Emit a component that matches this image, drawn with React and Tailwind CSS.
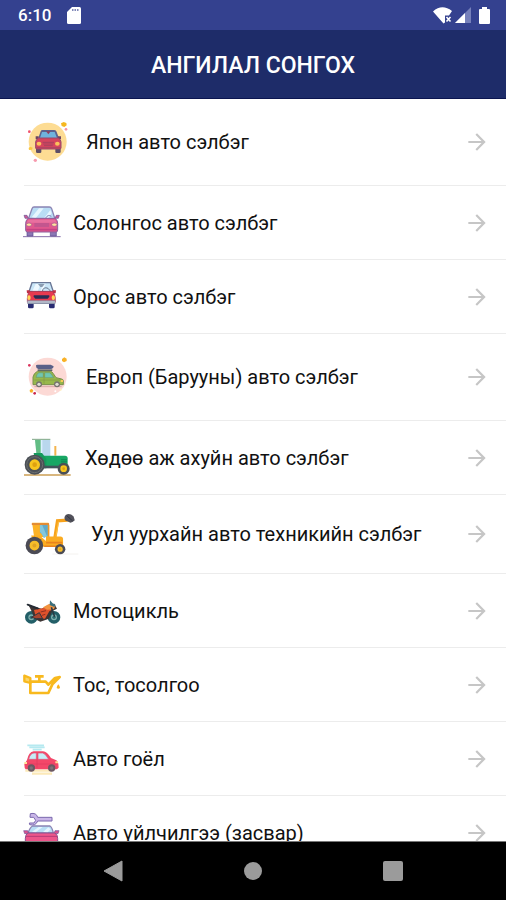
// src/pages/CategoryPage.jsx
import React from 'react';
import { MdArrowForward } from 'react-icons/md';

const JapanCarIcon = () => (
  <svg viewBox="0 0 150 150" className="size-[50px] shrink-0" aria-hidden="true">
    <circle cx="71" cy="74" r="57" fill="#fddc93" />
    <path d="M111 19l8-4 8 3 1 7-7 5-8-3z" fill="#f5b71f" />
    <circle cx="16" cy="44" r="4" fill="#f0526b" />
    <circle cx="126" cy="37" r="4" fill="#f793a5" />
    <circle cx="34" cy="130" r="5" fill="#f79aae" />
    <path d="M14 93l4-4 8 3-2 6-9 1z" fill="#fbc842" />
    <path d="M36 88h16v17q0 3-4 3h-8q-4 0-4-4zM94 88h16v16q0 4-4 4h-8q-4 0-4-3z" fill="#5d4e66" />
    <path d="M50 43q1-4 6-4h34q5 0 7 4l8 20H43z" fill="#5b6390" />
    <path d="M54 45h38l7 18H48z" fill="#6fb3dd" />
    <path d="M66 43h14l-7 9z" fill="#933e5c" />
    <path d="M35 58h9v9h-9zM102 58h9v9h-9z" fill="#6c4461" />
    <path d="M44 63h59q8 5 8 12v18q0 3-4 3H39q-4 0-4-3V75q0-7 9-12z" fill="#d6455e" stroke="#94496a" strokeWidth="3" />
    <ellipse cx="45" cy="80" rx="7" ry="6" fill="#fbc25c" />
    <ellipse cx="100" cy="80" rx="7" ry="6" fill="#fbc25c" />
    <path d="M56 76h34M58 81h30M60 86h26" stroke="#a0415e" strokeWidth="2.5" />
    <path d="M37 92h72" stroke="#b34460" strokeWidth="4" />
  </svg>
);

const KoreaCarIcon = () => (
  <svg viewBox="0 0 111 111" className="size-[37px] shrink-0 overflow-visible" aria-hidden="true">
    <path d="M-3 98h113" stroke="#8770aa" strokeWidth="3" />
    <path d="M9 82h18v14H9zM79 82h18v14H79z" fill="#8b77b4" stroke="#5b4c91" strokeWidth="2" />
    <path d="M30 9h46q5 0 7 5l10 31H13l11-31q2-5 6-5z" fill="#b9ddf5" stroke="#8b84b4" strokeWidth="4" />
    <path d="M23 40l22-27h14L35 43zM60 43l19-25 4 10-10 15z" fill="#e6f6ff" />
    <path d="M65 42q7-12 17-5" fill="none" stroke="#7e82b9" strokeWidth="3" />
    <path d="M0 34h9l4 9H3zM97 34h9l-3 9H93z" fill="#c95b95" stroke="#6b5398" strokeWidth="2" />
    <path d="M12 43h82q7 7 7 15v20q0 6-5 6H10q-5 0-5-6V58q0-8 7-15z" fill="#e0588e" stroke="#8d5e9c" strokeWidth="3" />
    <path d="M13 47h80l5 9H8z" fill="#e8709f" />
    <ellipse cx="15" cy="62" rx="8" ry="5" fill="#ffe39b" stroke="#a05b98" strokeWidth="2" />
    <ellipse cx="91" cy="62" rx="8" ry="5" fill="#ffe39b" stroke="#a05b98" strokeWidth="2" />
    <path d="M31 60h44M31 66h44" stroke="#a5548f" strokeWidth="3" />
    <path d="M7 77h92" stroke="#c44384" strokeWidth="5" />
  </svg>
);

const RussiaCarIcon = () => (
  <svg viewBox="0 0 111 111" className="size-[37px] shrink-0" aria-hidden="true">
    <path d="M12 73h17v14q0 4-4 4h-9q-4 0-4-4zM75 73h17v14q0 4-4 4h-9q-4 0-4-4z" fill="#292c72" />
    <path d="M24 14h55l9 27H15z" fill="#c9e6f8" stroke="#6a7897" strokeWidth="4" />
    <path d="M35 18h15l-9 22H25zM58 17h7L56 40h-7z" fill="#edf8ff" />
    <path d="M42 18h20l-7 9h-6z" fill="#8a9cb1" />
    <path d="M55 40q3-15 17-9l8 9" fill="none" stroke="#69778f" strokeWidth="3" />
    <path d="M8 37h9l2 9H9zM87 37h9l-1 9H84z" fill="#c03046" />
    <path d="M17 40h69q8 9 8 21v12H10V61q0-12 7-21z" fill="#e73a50" stroke="#9a3253" strokeWidth="2" />
    <path d="M10 67h84v11H10z" fill="#8b93a8" />
    <path d="M31 52h43q3 0 2 4l-5 6H34l-5-6q-1-4 2-4z" fill="#272d55" />
    <ellipse cx="15" cy="59" rx="5" ry="7" fill="#ffd759" />
    <ellipse cx="88" cy="59" rx="5" ry="7" fill="#ffd759" />
    <path d="M11 72h82" stroke="#d5dce6" strokeWidth="3" />
  </svg>
);

const EuropeCarIcon = () => (
  <svg viewBox="0 0 150 150" className="size-[50px] shrink-0" aria-hidden="true">
    <circle cx="71" cy="74" r="57" fill="#fcd9d5" />
    <path d="M114 21l7-5 7 4v7l-8 4-6-4z" fill="#f9b126" />
    <circle cx="16" cy="40" r="4" fill="#db365f" />
    <circle cx="32" cy="124" r="4" fill="#cb254c" />
    <path d="M17 114l6-4 5 5-3 7-7-1z" fill="#f9b126" />
    <circle cx="110" cy="113" r="3" fill="#fff0be" />
    <circle cx="94" cy="118" r="3" fill="#fff" />
    <path d="M31 104h82" stroke="#dba7a8" strokeWidth="3" />
    <path d="M36 42q-1-4 5-4h39l9 5q0 7-7 8H43q-7-1-7-9z" fill="#596088" />
    <path d="M41 52h44v5H41z" fill="#5b6468" />
    <path d="M40 58h39q5 0 9 7l8 12 17 4q5 1 5 6v11H27V75q3-12 13-17z" fill="#98b84b" stroke="#7a8f4c" strokeWidth="3" />
    <path d="M44 62h14v14H36q2-10 8-14zM62 62h14q5 0 13 15H62z" fill="#70c6b1" stroke="#6f9a66" strokeWidth="2" />
    <path d="M60 62v33M31 84h81" stroke="#7f9844" strokeWidth="2" />
    <path d="M110 84h7v6h-7z" fill="#f9cc59" />
    <circle cx="45" cy="97" r="9" fill="#76726f" />
    <circle cx="45" cy="97" r="5" fill="#dfddd1" />
    <circle cx="99" cy="97" r="9" fill="#76726f" />
    <circle cx="99" cy="97" r="5" fill="#dfddd1" />
  </svg>
);

const TractorIcon = () => (
  <svg viewBox="0 0 147 111" className="h-[37px] w-[49px] shrink-0 overflow-visible" aria-hidden="true">
    <path d="M0 108h140" stroke="#d8b67e" strokeWidth="6" />
    <path d="M34 2h45v52H38z" fill="#b9d7ed" />
    <path d="M33 3h19v47H38z" fill="#62bd84" />
    <path d="M50 3h5v40h-5z" fill="#dcefff" />
    <path d="M24 1h55" stroke="#7da785" strokeWidth="3" />
    <path d="M91 21h6v29h-6z" fill="#f3b44e" />
    <path d="M60 50h63q8 0 8 8v24H60z" fill="#18a764" />
    <path d="M29 42h25l13 17v29H36z" fill="#14995c" />
    <path d="M111 62h18M111 67h18M111 72h18" stroke="#087f4c" strokeWidth="2" />
    <path d="M60 80h46v8H60z" fill="#42555b" />
    <circle cx="32" cy="77" r="30" fill="#4b5056" />
    <circle cx="32" cy="77" r="24" fill="none" stroke="#6b6e70" strokeWidth="3" />
    <circle cx="32" cy="77" r="16" fill="#f6c51f" />
    <circle cx="32" cy="77" r="7" fill="#dda111" />
    <circle cx="119" cy="89" r="18" fill="#4b5056" />
    <circle cx="119" cy="89" r="10" fill="#f6c51f" />
    <circle cx="119" cy="89" r="4" fill="#dda111" />
  </svg>
);

const LoaderIcon = () => (
  <svg viewBox="0 0 165 129" className="h-[42px] w-[55px] shrink-0" aria-hidden="true">
    <path d="M85 126h80" stroke="#f7f5f3" strokeWidth="4" />
    <path d="M23 30h50v44H29z" fill="#fcb225" />
    <path d="M47 37h24v34l-12 5q-7-15-12-15z" fill="#60aaca" />
    <path d="M47 37h7l15 35-10 4q-8-16-12-18z" fill="#83c7dc" />
    <path d="M22 34h53" stroke="#e28a35" strokeWidth="6" />
    <path d="M74 36v38" stroke="#ee921c" strokeWidth="4" />
    <path d="M93 76l8-52 31-2" fill="none" stroke="#f7a21b" strokeWidth="10" />
    <path d="M96 72l8-45" stroke="#ffc141" strokeWidth="3" />
    <path d="M126 6q12-7 24 4l4 12q-5 5-13 8l-16-7q-6-9 1-17z" fill="#51515a" />
    <path d="M129 8l18 16" stroke="#303542" strokeWidth="3" />
    <path d="M66 72h44q8 0 8 8v23H64z" fill="#fbac22" />
    <path d="M20 69h27l19 18v17H33z" fill="#fbad20" />
    <path d="M66 91h50M60 102h38" stroke="#e8821d" strokeWidth="5" />
    <circle cx="30" cy="100" r="27" fill="#4b4b55" />
    <circle cx="30" cy="100" r="15" fill="#f6bd2a" />
    <circle cx="30" cy="100" r="6" fill="#e0a325" />
    <circle cx="109" cy="111" r="16" fill="#4b4b55" />
    <circle cx="109" cy="111" r="8" fill="#f6bd2a" />
    <circle cx="109" cy="111" r="3" fill="#e0a325" />
  </svg>
);

const MotorcycleIcon = () => (
  <svg viewBox="0 0 111 111" className="size-[37px] shrink-0" aria-hidden="true">
    <circle cx="22" cy="76" r="14" fill="#7fb0ae" stroke="#235f68" strokeWidth="10" />
    <circle cx="90" cy="76" r="14" fill="#7fb0ae" stroke="#235f68" strokeWidth="10" />
    <circle cx="22" cy="76" r="5" fill="#2f6f74" />
    <circle cx="90" cy="76" r="5" fill="#2f6f74" />
    <path d="M13 38l24 8 16 4 20-11 18-4 8 15-14 7-10 23-26 9-18-9-7-20z" fill="#3d3534" />
    <path d="M30 54l29-6 15-8 18 9-16 9-13 22-27-2z" fill="#e0522c" />
    <path d="M57 46l18-10 19 7-5 9-20 1z" fill="#f29440" />
    <path d="M78 25l8 9 9 5-4 6-14-6z" fill="#3c6f7c" />
    <path d="M82 46l10 28" stroke="#293b45" strokeWidth="5" />
    <path d="M22 76l24-14 10 18H37z" fill="#a9452f" stroke="#303640" strokeWidth="3" />
    <path d="M50 60l16-4M54 70l10-3" stroke="#8f2f22" strokeWidth="3" />
    <path d="M11 38l30 11" stroke="#252b34" strokeWidth="6" strokeLinecap="round" />
  </svg>
);

const OilIcon = () => (
  <svg viewBox="0 0 111 111" className="size-[37px] shrink-0 overflow-visible" aria-hidden="true">
    <path d="M19 36L1 29v17l18 5z" fill="#fbd56a" stroke="#f8b91e" strokeWidth="7" strokeLinejoin="round" />
    <path d="M19 47h46l8 9 20-20 14-3-22 22-12 26H19z" fill="none" stroke="#f8b91e" strokeWidth="8" strokeLinejoin="round" />
    <path d="M33 31h26M46 31v14" stroke="#f8b91e" strokeWidth="8" />
    <path d="M103 55q-6 7-5 11 5 5 10 0 1-4-5-11z" fill="#f9b31a" />
  </svg>
);

const AccessoryCarIcon = () => (
  <svg viewBox="0 0 111 111" className="size-[37px] shrink-0" aria-hidden="true">
    <path d="M10 16h50M16 22h46M26 29h27" stroke="#b5e9f0" strokeWidth="5" />
    <path d="M4 92h78M24 101h60" stroke="#fce9b8" strokeWidth="7" />
    <path d="M9 60q5-24 20-26h28q12 1 24 20l16 7q7 3 7 22l-5 5H5q-4-3-4-15z" fill="#f34769" />
    <path d="M14 58q4-18 16-19h7v19zM42 39h14q8 1 18 19H42z" fill="#c6eef8" stroke="#dc5578" strokeWidth="2" />
    <path d="M39 58v26M5 72h95" stroke="#e03b5f" strokeWidth="2" />
    <path d="M1 66h8v6H1zM94 64h8v6h-8z" fill="#ffe297" />
    <circle cx="22" cy="84" r="11" fill="#6b5863" />
    <circle cx="22" cy="84" r="5" fill="#7d7178" />
    <circle cx="83" cy="84" r="11" fill="#6b5863" />
    <circle cx="83" cy="84" r="5" fill="#7d7178" />
  </svg>
);

const ServiceCarIcon = () => (
  <svg viewBox="0 0 111 111" className="size-[37px] shrink-0 overflow-visible" aria-hidden="true">
    <path d="M19-1q18-4 22 11h43v11H41q-6 16-24 11l-1-5h14l5-8-6-9H18z" fill="#c9b6e8" stroke="#7b69ae" strokeWidth="3" />
    <path d="M26 36h52q6 3 10 21H12q6-17 14-21z" fill="#b8def5" stroke="#8b84b4" strokeWidth="4" />
    <path d="M24 53l20-14h12L35 55zM57 54l16-14 7 6-9 9z" fill="#e5f5ff" />
    <path d="M-1 50h12l3 9H2zM93 50h12l-3 9H90z" fill="#d9528f" stroke="#76539a" strokeWidth="2" />
    <path d="M11 57h82q8 6 8 16v23H4V73q0-10 7-16z" fill="#ed568b" stroke="#89508f" strokeWidth="3" />
    <path d="M5 67h96" stroke="#b53c78" strokeWidth="3" />
    <path d="M31 84h42" stroke="#85508f" strokeWidth="4" />
  </svg>
);

const categories = [
  { id: 1, title: 'Япон авто сэлбэг', Icon: JapanCarIcon },
  { id: 2, title: 'Солонгос авто сэлбэг', Icon: KoreaCarIcon },
  { id: 3, title: 'Орос авто сэлбэг', Icon: RussiaCarIcon },
  { id: 4, title: 'Европ (Барууны) авто сэлбэг', Icon: EuropeCarIcon },
  { id: 5, title: 'Хөдөө аж ахуйн авто сэлбэг', Icon: TractorIcon },
  { id: 6, title: 'Уул уурхайн авто техникийн сэлбэг', Icon: LoaderIcon },
  { id: 7, title: 'Мотоцикль', Icon: MotorcycleIcon },
  { id: 8, title: 'Тос, тосолгоо', Icon: OilIcon },
  { id: 9, title: 'Авто гоёл', Icon: AccessoryCarIcon },
  { id: 10, title: 'Авто үйлчилгээ (засвар)', Icon: ServiceCarIcon },
];

function StatusBar() {
  return (
    <div className="flex h-[30px] shrink-0 items-center justify-between bg-[#34418f] pr-4 pl-[18px] text-white">
      <div className="flex items-center gap-4">
        <span className="text-[17px] leading-none font-medium">6:10</span>
        <svg viewBox="0 0 14 17" className="h-[17px] w-[14px]" fill="currentColor" aria-hidden="true">
          <path d="M5 0h7.500q1.500 0 1.500 1.500v14q0 1.500-1.500 1.500h-11Q0 17 0 15.500V5z" />
          <path d="M5 3h7" stroke="#8088b8" strokeWidth="2" strokeDasharray="1.500 1" />
        </svg>
      </div>
      <div className="flex items-center">
        <svg viewBox="0 0 20 17" className="h-[17px] w-5" aria-hidden="true">
          <path d="M0 4.500Q9-3.500 19 4l-3 4.500h-4v7L10.500 16.500z" fill="currentColor" />
          <path d="M13.500 10l4 4.500M17.500 10l-4 4.500" stroke="currentColor" strokeWidth="1.600" />
        </svg>
        <svg viewBox="0 0 16 16" className="ml-[2px] h-4 w-4" aria-hidden="true">
          <path d="M16 0v16H0z" fill="#7680ba" />
          <path d="M10 6v10H0z" fill="currentColor" />
        </svg>
        <svg viewBox="0 0 11 17" className="ml-2 h-[17px] w-[11px]" fill="currentColor" aria-hidden="true">
          <path d="M3 0h5v2h2q1 0 1 1v13q0 1-1 1H1q-1 0-1-1V3q0-1 1-1h2z" />
        </svg>
      </div>
    </div>
  );
}

function CategoryRow({ title, Icon }) {
  return (
    <li className="ml-6 border-b border-[#ececec]">
      <button className="flex w-full items-center gap-3 py-[18px] pr-4 text-left">
        <Icon />
        <span className="flex-1 text-[20px] leading-6 text-[#111]">{title}</span>
        <MdArrowForward className="size-[26px] shrink-0 text-[#c6c6c6]" />
      </button>
    </li>
  );
}

function NavBar() {
  return (
    <nav className="flex h-[59px] shrink-0 items-center justify-center gap-[116px] border-t border-[#777] bg-black text-[#9b9b9b]">
      <button aria-label="Back" className="flex size-6 items-center justify-center">
        <svg viewBox="0 0 20 22" className="h-[22px] w-5" fill="currentColor"><path d="M19 1v20L1 11z" stroke="currentColor" strokeLinejoin="round" /></svg>
      </button>
      <button aria-label="Home" className="flex size-6 items-center justify-center">
        <span className="size-[18px] rounded-full bg-[#9b9b9b]" />
      </button>
      <button aria-label="Recent apps" className="flex size-6 items-center justify-center">
        <span className="size-5 rounded-xs bg-[#9b9b9b]" />
      </button>
    </nav>
  );
}

export default function CategoryPage() {
  return (
    <div className="flex h-screen flex-col bg-white font-[Roboto,sans-serif]">
      <StatusBar />
      <header className="flex h-[69px] shrink-0 items-center justify-center border-b border-[#0b1550] bg-[#1e2c69] pt-1">
        <h1 className="text-[23px] font-medium text-white">АНГИЛАЛ СОНГОХ</h1>
      </header>
      <main className="min-h-0 flex-1 overflow-hidden">
        <ul>
          {categories.map((category) => (
            <CategoryRow key={category.id} title={category.title} Icon={category.Icon} />
          ))}
        </ul>
      </main>
      <NavBar />
    </div>
  );
}
